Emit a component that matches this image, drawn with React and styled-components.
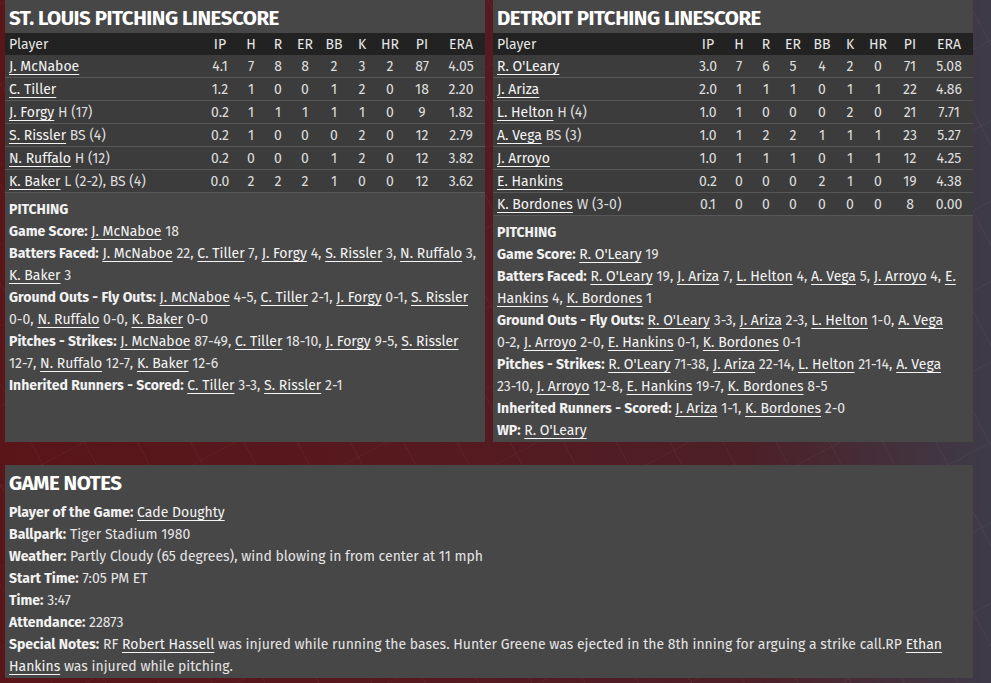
import React from "react";
import styled, { createGlobalStyle } from "styled-components";

const Global = createGlobalStyle`
  html, body {
    margin: 0;
    padding: 0;
    height: 100%;
  }
  body {
    background:
      repeating-linear-gradient(62deg, rgba(255,255,255,0) 0 46px, rgba(255,255,255,0.035) 46px 47px),
      repeating-linear-gradient(-28deg, rgba(255,255,255,0) 0 70px, rgba(255,255,255,0.03) 70px 71px),
      linear-gradient(90deg, #5a1519 0%, #551a1f 45%, #4d1f27 75%, #3e3b48 100%);
    font-family: "Fira Sans", Roboto, "Open Sans", sans-serif;
    color: #efefef;
    font-size: 14px;
  }
`;

const Page = styled.div`
  padding: 0 18px 6px 5px;
  display: flex;
  flex-direction: column;
  gap: 23px;
`;

const Columns = styled.div`
  display: grid;
  grid-template-columns: 480px 480px;
  gap: 8px;
`;

const Panel = styled.section`
  background: #474747;
  display: flex;
  flex-direction: column;
`;

const Title = styled.h2`
  margin: 0;
  height: 33px;
  padding: 4px 4px 0;
  box-sizing: border-box;
  font-size: 20.5px;
  letter-spacing: -0.5px;
  line-height: 28px;
  font-weight: 700;
  color: #ffffff;
`;

const Table = styled.table`
  width: 100%;
  border-collapse: collapse;
  margin-bottom: 5px;
`;

const Th = styled.th`
  background: #222222;
  height: 22px;
  padding: 0;
  font-weight: 400;
  color: #e6e6e6;
  text-align: ${(p) => (p.$left ? "left" : "center")};
  padding-left: ${(p) => (p.$left ? "4px" : "0")};
  width: ${(p) => p.$w || "auto"};
`;

const Td = styled.td`
  background: #3c3c3c;
  height: 22px;
  padding: 0;
  border-bottom: 1px solid #575757;
  color: #dedede;
  text-align: ${(p) => (p.$left ? "left" : "center")};
  padding-left: ${(p) => (p.$left ? "4px" : "0")};
  white-space: nowrap;
`;

const Link = styled.a`
  color: #f4f4f4;
  text-decoration: underline;
  text-underline-offset: 3px;
  cursor: pointer;
`;

const Val = styled.span`
  white-space: nowrap;
`;

const Lines = styled.div`
  padding: ${(p) => (p.$top ? "4px" : "1px")} 4px 0;
  line-height: 22px;
`;

const Line = styled.div`
  color: #e4e4e4;
`;

const Label = styled.b`
  font-weight: 700;
  color: #f2f2f2;
`;

const cols = [
  ["IP", "38px"],
  ["H", "24px"],
  ["R", "30px"],
  ["ER", "24px"],
  ["BB", "34px"],
  ["K", "22px"],
  ["HR", "34px"],
  ["PI", "30px"],
  ["ERA", "48px"],
];

const stl = [
  ["J. McNaboe", "", ["4.1", 7, 8, 8, 2, 3, 2, 87, "4.05"]],
  ["C. Tiller", "", ["1.2", 1, 0, 0, 1, 2, 0, 18, "2.20"]],
  ["J. Forgy", "H (17)", ["0.2", 1, 1, 1, 1, 1, 0, 9, "1.82"]],
  ["S. Rissler", "BS (4)", ["0.2", 1, 0, 0, 0, 2, 0, 12, "2.79"]],
  ["N. Ruffalo", "H (12)", ["0.2", 0, 0, 0, 1, 2, 0, 12, "3.82"]],
  ["K. Baker", "L (2-2), BS (4)", ["0.0", 2, 2, 2, 1, 0, 0, 12, "3.62"]],
];

const det = [
  ["R. O'Leary", "", ["3.0", 7, 6, 5, 4, 2, 0, 71, "5.08"]],
  ["J. Ariza", "", ["2.0", 1, 1, 1, 0, 1, 1, 22, "4.86"]],
  ["L. Helton", "H (4)", ["1.0", 1, 0, 0, 0, 2, 0, 21, "7.71"]],
  ["A. Vega", "BS (3)", ["1.0", 1, 2, 2, 1, 1, 1, 23, "5.27"]],
  ["J. Arroyo", "", ["1.0", 1, 1, 1, 0, 1, 1, 12, "4.25"]],
  ["E. Hankins", "", ["0.2", 0, 0, 0, 2, 1, 0, 19, "4.38"]],
  ["K. Bordones", "W (3-0)", ["0.1", 0, 0, 0, 0, 0, 0, 8, "0.00"]],
];

const stlNotes = [
  ["Game Score", [["J. McNaboe", "18"]]],
  ["Batters Faced", [["J. McNaboe", "22"], ["C. Tiller", "7"], ["J. Forgy", "4"], ["S. Rissler", "3"], ["N. Ruffalo", "3"], ["K. Baker", "3"]]],
  ["Ground Outs - Fly Outs", [["J. McNaboe", "4-5"], ["C. Tiller", "2-1"], ["J. Forgy", "0-1"], ["S. Rissler", "0-0"], ["N. Ruffalo", "0-0"], ["K. Baker", "0-0"]]],
  ["Pitches - Strikes", [["J. McNaboe", "87-49"], ["C. Tiller", "18-10"], ["J. Forgy", "9-5"], ["S. Rissler", "12-7"], ["N. Ruffalo", "12-7"], ["K. Baker", "12-6"]]],
  ["Inherited Runners - Scored", [["C. Tiller", "3-3"], ["S. Rissler", "2-1"]]],
];

const detNotes = [
  ["Game Score", [["R. O'Leary", "19"]]],
  ["Batters Faced", [["R. O'Leary", "19"], ["J. Ariza", "7"], ["L. Helton", "4"], ["A. Vega", "5"], ["J. Arroyo", "4"], ["E. Hankins", "4"], ["K. Bordones", "1"]]],
  ["Ground Outs - Fly Outs", [["R. O'Leary", "3-3"], ["J. Ariza", "2-3"], ["L. Helton", "1-0"], ["A. Vega", "0-2"], ["J. Arroyo", "2-0"], ["E. Hankins", "0-1"], ["K. Bordones", "0-1"]]],
  ["Pitches - Strikes", [["R. O'Leary", "71-38"], ["J. Ariza", "22-14"], ["L. Helton", "21-14"], ["A. Vega", "23-10"], ["J. Arroyo", "12-8"], ["E. Hankins", "19-7"], ["K. Bordones", "8-5"]]],
  ["Inherited Runners - Scored", [["J. Ariza", "1-1"], ["K. Bordones", "2-0"]]],
  ["WP", [["R. O'Leary", ""]]],
];

const Linescore = ({ team, rows, notes }) => (
  <Panel>
    <Title>{team} PITCHING LINESCORE</Title>
    <Table>
      <thead>
        <tr>
          <Th $left>Player</Th>
          {cols.map(([c, w]) => (
            <Th key={c} $w={w}>{c}</Th>
          ))}
        </tr>
      </thead>
      <tbody>
        {rows.map(([name, dec, stats]) => (
          <tr key={name}>
            <Td $left>
              <Link>{name}</Link>
              {dec && " " + dec}
            </Td>
            {stats.map((s, i) => (
              <Td key={i}>{s}</Td>
            ))}
          </tr>
        ))}
      </tbody>
    </Table>
    <Lines>
      <Line>
        <Label>PITCHING</Label>
      </Line>
      {notes.map(([label, items]) => (
        <Line key={label}>
          <Label>{label}:</Label>{" "}
          {items.map(([n, v], i) => (
            <React.Fragment key={n}>
              <Link>{n}</Link>{" "}
              <Val>
                {v}
                {i < items.length - 1 && ","}
              </Val>{" "}
            </React.Fragment>
          ))}
        </Line>
      ))}
    </Lines>
  </Panel>
);

const App = () => (
  <>
    <Global />
    <Page>
      <Columns>
        <Linescore team="ST. LOUIS" rows={stl} notes={stlNotes} />
        <Linescore team="DETROIT" rows={det} notes={detNotes} />
      </Columns>
      <Panel>
        <Title>GAME NOTES</Title>
        <Lines $top>
          <Line>
            <Label>Player of the Game:</Label> <Link>Cade Doughty</Link>
          </Line>
          <Line>
            <Label>Ballpark:</Label> Tiger Stadium 1980
          </Line>
          <Line>
            <Label>Weather:</Label> Partly Cloudy (65 degrees), wind blowing in from center at 11 mph
          </Line>
          <Line>
            <Label>Start Time:</Label> 7:05 PM ET
          </Line>
          <Line>
            <Label>Time:</Label> 3:47
          </Line>
          <Line>
            <Label>Attendance:</Label> 22873
          </Line>
          <Line>
            <Label>Special Notes:</Label> RF <Link>Robert Hassell</Link> was injured while running the
            bases. Hunter Greene was ejected in the 8th inning for arguing a strike call.RP{" "}
            <Link>Ethan Hankins</Link> was injured while pitching.
          </Line>
        </Lines>
      </Panel>
    </Page>
  </>
);

export default App;
